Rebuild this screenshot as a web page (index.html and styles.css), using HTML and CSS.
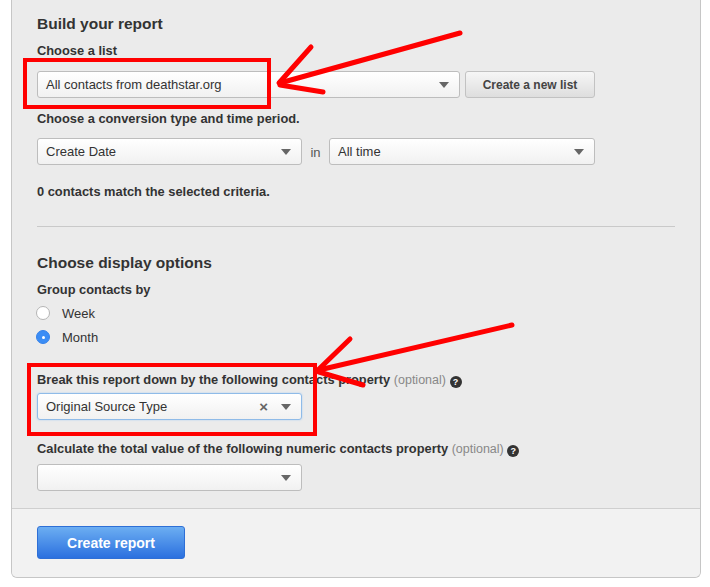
FILE: index.html
```html
<!DOCTYPE html>
<html>
<head>
<meta charset="utf-8">
<link rel="stylesheet" href="styles.css">
</head>
<body>
<div class="page">
  <div class="panel">
    <div class="panel-body">
      <h2 class="heading">Build your report</h2>
      <div class="label label-first">Choose a list</div>
      <div class="row row-list">
        <div class="select select-list"><span class="select-text">All contacts from deathstar.org</span><span class="caret"></span></div>
        <div class="btn-gray">Create a new list</div>
      </div>
      <div class="label label-conv">Choose a conversion type and time period.</div>
      <div class="row row-conv">
        <div class="select select-half"><span class="select-text">Create Date</span><span class="caret"></span></div>
        <span class="in">in</span>
        <div class="select select-time"><span class="select-text">All time</span><span class="caret"></span></div>
      </div>
      <div class="label label-match">0 contacts match the selected criteria.</div>
      <div class="divider"></div>
      <h2 class="heading heading-display">Choose display options</h2>
      <div class="label label-group">Group contacts by</div>
      <div class="radios">
        <div class="radio-row"><span class="radio"></span><span class="radio-text">Week</span></div>
        <div class="radio-row"><span class="radio radio-on"></span><span class="radio-text">Month</span></div>
      </div>
      <div class="label label-break">Break this report down by the following contacts property <span class="optional">(optional)</span> <span class="help">?</span></div>
      <div class="select select-half select-focus select-break"><span class="select-text">Original Source Type</span><span class="clear">×</span><span class="caret"></span></div>
      <div class="label label-calc">Calculate the total value of the following numeric contacts property <span class="optional">(optional)</span> <span class="help">?</span></div>
      <div class="select select-half select-calc"><span class="select-text"></span><span class="caret"></span></div>
    </div>
    <div class="panel-footer">
      <div class="btn-blue">Create report</div>
    </div>
  </div>
  <svg class="annot" width="710" height="587" viewBox="0 0 710 587">
    <g fill="none" stroke="#ff0000" stroke-width="4">
      <rect x="25" y="60" width="244" height="47"/>
      <rect x="29" y="365" width="286" height="69"/>
    </g>
    <g fill="none" stroke="#ff0000" stroke-width="5" stroke-linecap="round">
      <path d="M460 33 L280 83"/>
      <path d="M311 47 L279 83"/>
      <path d="M280 85 L323 92"/>
      <path d="M512 325 L319 370"/>
      <path d="M350 339 L318 370"/>
      <path d="M319 372 L363 385"/>
    </g>
  </svg>
</div>
</body>
</html>
```
FILE: styles.css
```css
* { box-sizing: border-box; }
html, body { margin: 0; padding: 0; background: #ffffff; }
body {
  font-family: "Liberation Sans", Arial, sans-serif;
  color: #333333;
  width: 710px;
  height: 587px;
  overflow: hidden;
}
.page { position: relative; width: 710px; height: 587px; }
.panel {
  margin-left: 11px;
  width: 690px;
  height: 578px;
  border: 1px solid #c6c6c6;
  border-top: none;
  border-radius: 0 0 6px 6px;
  background: #ebebeb;
  display: flex;
  flex-direction: column;
  overflow: hidden;
}
.panel-body {
  padding: 15px 25px 17px 25px;
  display: flex;
  flex-direction: column;
  align-items: flex-start;
}
.heading {
  margin: 0;
  font-size: 15.5px;
  line-height: 18px;
  font-weight: bold;
  color: #333;
}
.label {
  font-size: 12.85px;
  line-height: 16px;
  font-weight: bold;
  color: #333;
}
.label-first { margin-top: 10px; }
.row { display: flex; align-items: center; }
.row-list { margin-top: 12px; }
.label-conv { margin-top: 13px; }
.row-conv { margin-top: 11px; }
.label-match { margin-top: 19px; }
.divider { align-self: stretch; height: 1px; background: #c9c9c9; margin-top: 26px; }
.heading-display { margin-top: 27px; }
.label-group { margin-top: 10px; }
.radios { margin-top: 7px; display: flex; flex-direction: column; gap: 8px; }
.label-break { margin-top: 27px; }
.select-break { margin-top: 5px; }
.label-calc { margin-top: 21px; }
.select-calc { margin-top: 7px; }

.select {
  height: 27px;
  border: 1px solid #bdbdbd;
  border-radius: 3px;
  background: linear-gradient(#ffffff, #f1f1f1);
  display: flex;
  align-items: center;
  padding: 0 10px 0 8px;
  font-size: 13px;
  color: #333;
}
.select-text { flex: 1; white-space: nowrap; }
.caret {
  width: 0; height: 0;
  border-left: 5px solid transparent;
  border-right: 5px solid transparent;
  border-top: 6px solid #666;
  margin-top: 1px;
}
.clear {
  font-size: 15px;
  color: #666;
  font-weight: bold;
  margin-right: 13px;
  line-height: 1;
}
.select-list { width: 423px; }
.select-half { width: 265px; }
.select-time { width: 266px; }
.select-focus { border-color: #8fbbe8; box-shadow: 0 0 2px #a9cdf2; }
.in { width: 27px; text-align: center; font-size: 13px; color: #555; padding-top: 2px; }
.btn-gray {
  margin-left: 5px;
  width: 130px;
  height: 27px;
  border: 1px solid #c2c2c2;
  border-radius: 3px;
  background: linear-gradient(#f6f6f6, #dedede);
  display: flex;
  align-items: center;
  justify-content: center;
  font-size: 12px;
  font-weight: bold;
  color: #444;
}
.radio-row { display: flex; align-items: center; height: 16px; }
.radio {
  width: 14px; height: 14px;
  border-radius: 50%;
  border: 1px solid #b5b5b5;
  background: #fff;
  margin-left: -1px;
  position: relative;
}
.radio-on {
  background: #3b8df5;
  border-color: #3582ea;
}
.radio-on::after {
  content: "";
  position: absolute;
  left: 4.5px; top: 4.5px;
  width: 3px; height: 3px;
  border-radius: 50%;
  background: #fff;
}
.radio-text { margin-left: 12px; font-size: 13px; color: #333; }
.optional { font-weight: normal; color: #888; font-size: 12.5px; }
.help {
  display: inline-block;
  width: 12px; height: 12px;
  border-radius: 50%;
  background: #333;
  color: #fff;
  font-size: 9px;
  line-height: 12px;
  text-align: center;
  font-weight: bold;
  vertical-align: -1px;
}
.panel-footer {
  flex: 1;
  border-top: 1px solid #cfcfcf;
  background: #f2f2f2;
  padding: 17px 25px 0 25px;
}
.btn-blue {
  width: 148px;
  height: 33px;
  border: 1px solid #2e6fd6;
  border-radius: 3px;
  background: linear-gradient(#6caef2, #2b70df);
  color: #fff;
  font-size: 14px;
  font-weight: bold;
  display: flex;
  align-items: center;
  justify-content: center;
}
.annot { position: absolute; left: 0; top: 0; pointer-events: none; }
```
